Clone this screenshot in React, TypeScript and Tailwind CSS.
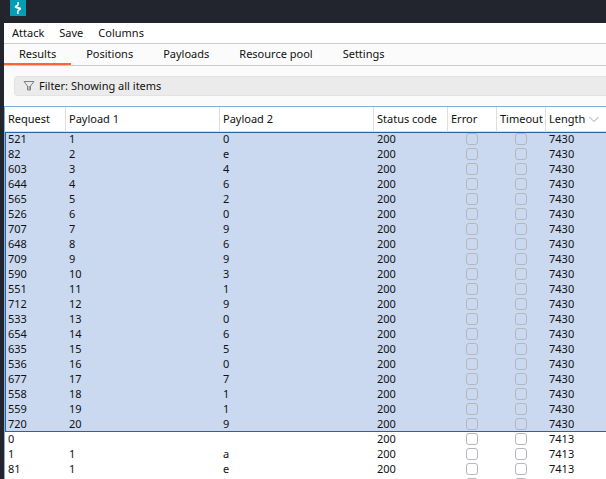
import React from 'react';

type Row = [request: string, payload1: string, payload2: string, length: string];

const selected: Row[] = [
  ['521', '1', '0', '7430'],
  ['82', '2', 'e', '7430'],
  ['603', '3', '4', '7430'],
  ['644', '4', '6', '7430'],
  ['565', '5', '2', '7430'],
  ['526', '6', '0', '7430'],
  ['707', '7', '9', '7430'],
  ['648', '8', '6', '7430'],
  ['709', '9', '9', '7430'],
  ['590', '10', '3', '7430'],
  ['551', '11', '1', '7430'],
  ['712', '12', '9', '7430'],
  ['533', '13', '0', '7430'],
  ['654', '14', '6', '7430'],
  ['635', '15', '5', '7430'],
  ['536', '16', '0', '7430'],
  ['677', '17', '7', '7430'],
  ['558', '18', '1', '7430'],
  ['559', '19', '1', '7430'],
  ['720', '20', '9', '7430'],
];

const others: Row[] = [
  ['0', '', '', '7413'],
  ['1', '1', 'a', '7413'],
  ['81', '1', 'e', '7413'],
  ['', '', '', ''],
];

const headers = ['Request', 'Payload 1', 'Payload 2', 'Status code', 'Error', 'Timeout'];

function Check({ label }: { label: string }) {
  return (
    <input
      type="checkbox"
      aria-label={label}
      className="mx-auto block size-3 appearance-none rounded-[3px] border border-[#b5b7bc] checked:bg-[#2a68a8]"
    />
  );
}

function ResultRow({ row }: { row: Row }) {
  const [request, payload1, payload2, length] = row;
  return (
    <tr className="h-[15px] leading-[13px]">
      <td className="pb-[2px] pl-[3px]">{request}</td>
      <td className="pb-[2px] pl-[3px]">{payload1}</td>
      <td className="pb-[2px] pl-[3px]">{payload2}</td>
      <td className="pb-[2px] pl-[3px]">{length && '200'}</td>
      <td className="pr-[1px] pb-[2px]">
        <Check label={`Error ${request}`} />
      </td>
      <td className="pr-[1px] pb-[2px]">
        <Check label={`Timeout ${request}`} />
      </td>
      <td className="pb-[2px] pl-[3px]">{length}</td>
    </tr>
  );
}

function Tab({ label, active = false }: { label: string; active?: boolean }) {
  return (
    <button
      type="button"
      role="tab"
      aria-selected={active}
      className={
        active ? 'border-b-2 border-[#ff6633] px-[15px]' : 'border-b-2 border-transparent px-[15px]'
      }
    >
      {label}
    </button>
  );
}

export default function App() {
  return (
    <div className="flex h-screen flex-col overflow-hidden bg-[#22252e] font-['Noto_Sans',sans-serif] text-[11px] leading-[15px] whitespace-nowrap text-[#111111]">
      <header className="h-[23px] shrink-0 pl-[10px]">
        <svg className="block size-4" viewBox="0 0 16 16" aria-label="Burp Suite">
          <rect width="16" height="16" fill="#039eb5" />
          <path
            d="M8.8 2v3.2L7.2 6.6l3.8 1.2v1.7L8.6 11v3H7.2v-3.4L8.8 9.2 4.8 7.8V6L7.4 4.6V2z"
            fill="#fff"
          />
        </svg>
      </header>
      <main className="ml-1 flex min-h-0 flex-1 flex-col bg-[#fbfbfb]">
        <nav className="flex h-[21px] shrink-0 gap-[15px] border-b border-[#cbcbcb] bg-white pb-[2px] pl-2">
          <button type="button">Attack</button>
          <button type="button">Save</button>
          <button type="button">Columns</button>
        </nav>
        <div role="tablist" className="flex h-[22px] shrink-0 border-b border-[#cbcbcb]">
          <Tab label="Results" active />
          <Tab label="Positions" />
          <Tab label="Payloads" />
          <Tab label="Resource pool" />
          <Tab label="Settings" />
        </div>
        <div className="py-[10px] pl-[10px]">
          <button
            type="button"
            className="flex h-5 w-full items-center gap-1 rounded-l-[4px] border border-r-0 border-[#e2e2e2] bg-[#ebebeb] pb-[2px] pl-2"
          >
            <svg className="size-3" viewBox="0 0 12 12" fill="none" stroke="#808080">
              <path d="M1 2.5h10L7.5 7v4h-3V7z" />
              <path d="M5.5 7v4h1.5V7z" fill="#a0a0a0" stroke="none" />
            </svg>
            Filter: Showing all items
          </button>
        </div>
        <div className="min-h-0 flex-1 overflow-hidden border-t border-l border-[#84acd8] bg-white">
          <table className="w-[640px] min-w-[calc(100%+8px)] table-fixed border-collapse text-left">
            <colgroup>
              <col className="w-[61px]" />
              <col className="w-[154px]" />
              <col className="w-[154px]" />
              <col className="w-[74px]" />
              <col className="w-[49px]" />
              <col className="w-[49px]" />
              <col />
            </colgroup>
            <thead>
              <tr className="h-[25px] shadow-[inset_0_-1px_0_#dedede]">
                {headers.map((name) => (
                  <th
                    key={name}
                    className="pb-[2px] pl-[3px] font-normal shadow-[inset_-1px_0_0_#dedede]"
                  >
                    {name}
                  </th>
                ))}
                <th className="pb-[2px] pl-[3px] font-normal">
                  <span className="flex items-center gap-1">
                    Length
                    <svg className="h-3 w-[10px]" viewBox="0 0 10 12" fill="none" stroke="#a3a3a3">
                      <path d="M.5 4L5 8.5 9.5 4" />
                    </svg>
                  </span>
                </th>
              </tr>
            </thead>
            <tbody className="bg-[#cad9f0] outline outline-1 -outline-offset-1 outline-[#2365a8]">
              {selected.map((row) => (
                <ResultRow key={row[0]} row={row} />
              ))}
            </tbody>
            <tbody>
              {others.map((row) => (
                <ResultRow key={row[0] + row[1]} row={row} />
              ))}
            </tbody>
          </table>
        </div>
      </main>
    </div>
  );
}
